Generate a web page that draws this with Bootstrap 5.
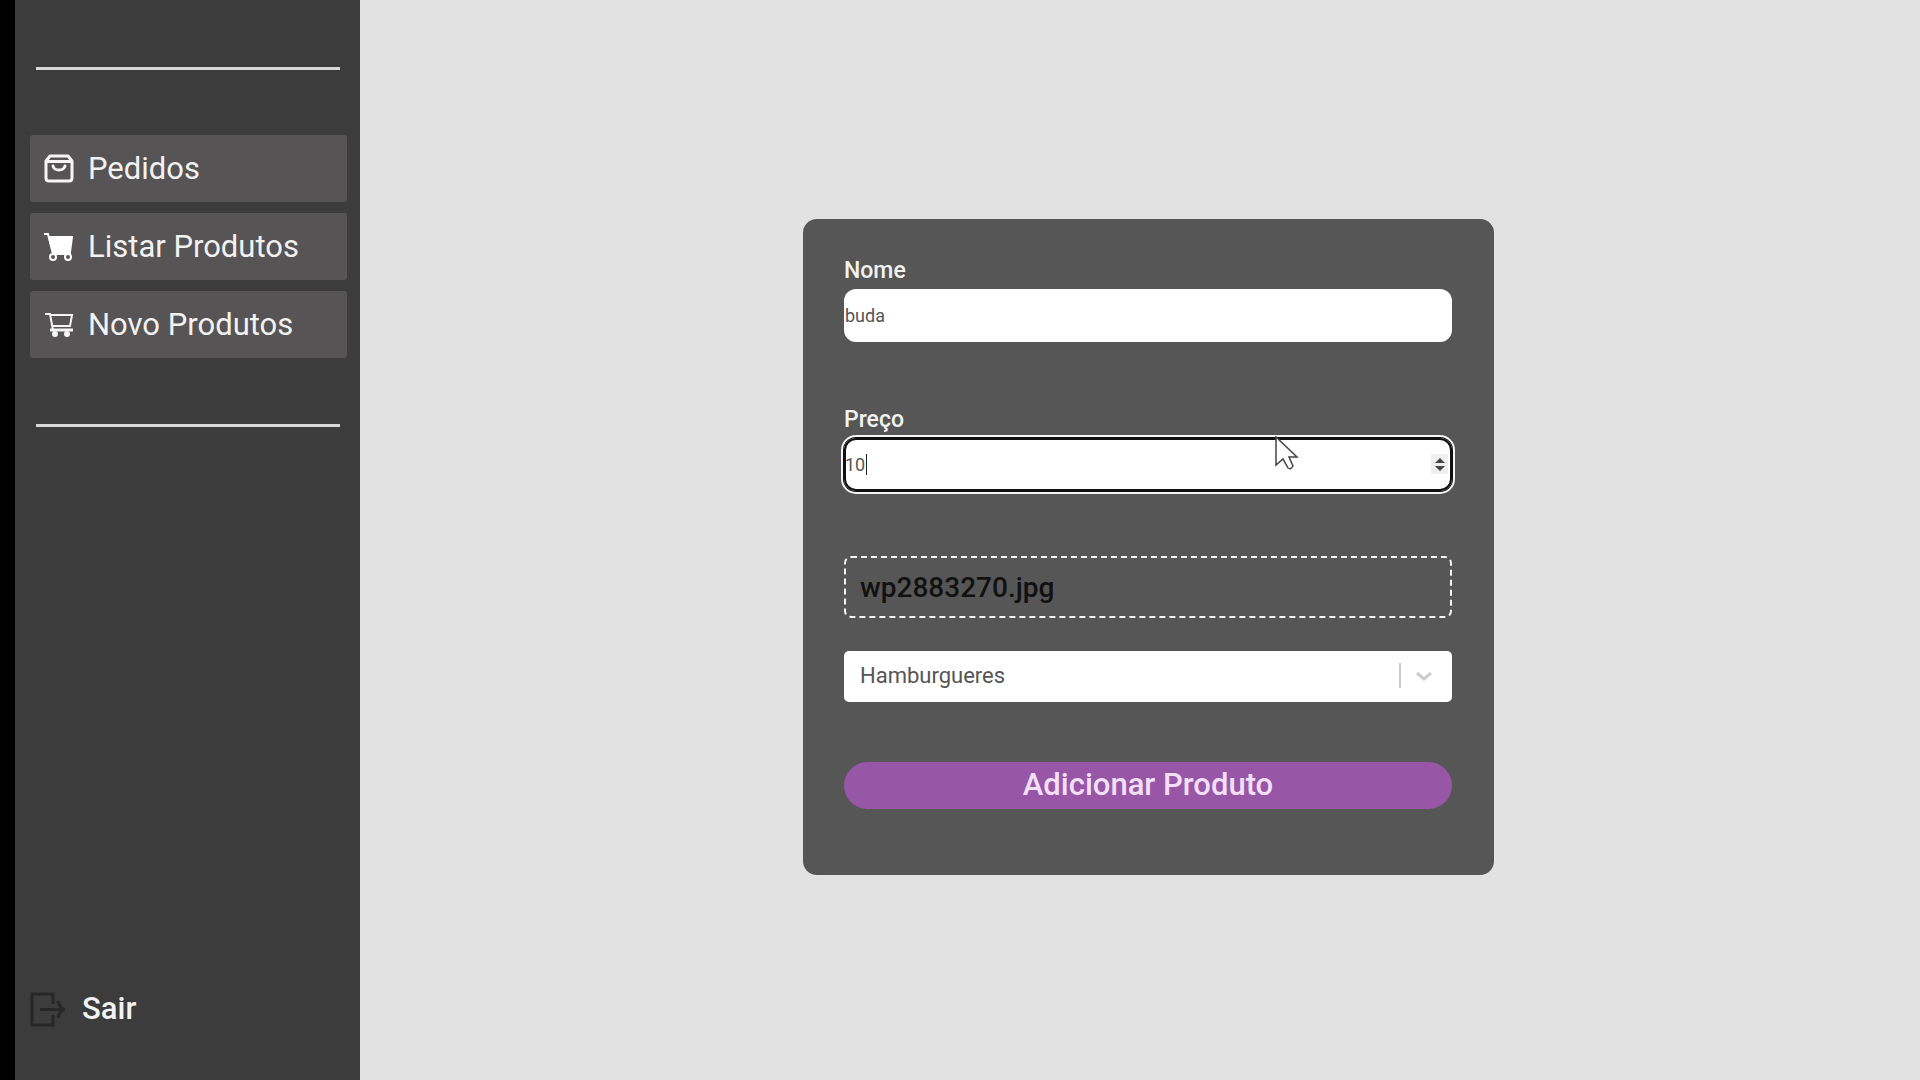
<!DOCTYPE html>
<html lang="pt-BR">
<head>
<meta charset="utf-8">
<meta name="viewport" content="width=device-width, initial-scale=1">
<title>Novo Produto</title>
<link href="https://cdn.jsdelivr.net/npm/bootstrap@5.3.0/dist/css/bootstrap.min.css" rel="stylesheet">
<style>
body { background: #e2e2e2; font-family: Roboto, "Liberation Sans", sans-serif; }
.side-panel { width: 360px; background: #3c3c3c; border-left: 15px solid #000; padding: 67px 13px 53px 15px; }
.side-rule { height: 3px; margin: 0 7px 0 6px; background: #d8d8d8; border: 0; opacity: 1; }
.side-menu { margin: 65px 0 66px; gap: 11px; }
.side-menu .nav-link { height: 67px; padding: 0 14px; gap: 14px; background: #565454; border-radius: 3px; }
.side-text { color: #f2f2f2; font-size: 31px; line-height: 36px; font-weight: 500; }
.side-menu .side-text { font-weight: 400; }
.exit-link { gap: 17px; }
.stage { padding: 13px 0 0 17px; }
.product-box { width: 691px; background: #565656; border-radius: 14px; padding: 37px 42px 66px 41px; }
.field-label { color: #f2f2f2; font-size: 23px; line-height: 30px; font-weight: 500; margin-bottom: 3px; }
.field-group { margin-bottom: 63px; }
.field-group + .field-group { margin-bottom: 65px; }
.field-box { height: 53px; border: 0; padding: 0 1px; border-radius: 12px; font-size: 18px; color: #555; background: #fff; }
.field-box:focus { box-shadow: none; }
.field-box.is-active, .field-box.is-active:focus { box-shadow: inset 0 0 0 2px #111, 0 0 0 1px #111, 0 0 0 3px #f5f5f5; appearance: textfield; }
.field-box.is-active::-webkit-inner-spin-button { appearance: none; }
.text-caret { left: 22px; top: 16px; width: 1px; height: 21px; background: #222; }
.stepper { right: 4px; top: 16px; width: 17px; height: 20px; background: #efefef; }
.pointer-mark { right: 153px; top: -2px; }
.file-box { height: 62px; padding: 2px 14px 0; margin-bottom: 33px; border: 2px dashed #f5f5f5; border-radius: 7px; color: #111; font-size: 28px; font-weight: 500; line-height: 32px; }
.category-select { height: 51px; padding: 0 60px 2px 16px; border: 0; border-radius: 5px; font-size: 22px; color: #555; background: #fff; }
.category-mark { right: 18px; top: 12px; }
.add-btn { height: 47px; margin-top: 60px; padding: 0; border: 0; border-radius: 24px; background: #9757a6; color: #f3dff7; font-size: 31px; line-height: 46px; font-weight: 500; }
</style>
<script src="https://cdn.jsdelivr.net/npm/bootstrap@5.3.0/dist/js/bootstrap.bundle.min.js"></script>
</head>
<body>
<div class="d-flex min-vh-100">
  <aside class="side-panel d-flex flex-column flex-shrink-0">
    <hr class="side-rule">
    <nav class="side-menu nav flex-column">
      <a class="nav-link side-text d-flex align-items-center" href="#">
        <svg width="30" height="30" viewBox="0 0 30 30" fill="none" stroke="#f5f5f5" stroke-width="3" stroke-linejoin="round" stroke-linecap="round" aria-hidden="true"><path d="M6 2H24L28 7V24Q28 27 25 27H5Q2 27 2 24V7ZM2.500 7.500H27.500"/><path d="M9 12Q10 16 15 16Q20 16 21 12"/></svg>
        Pedidos</a>
      <a class="nav-link side-text d-flex align-items-center" href="#">
        <svg width="30" height="30" viewBox="0 0 30 30" fill="none" stroke="#fff" stroke-width="2" aria-hidden="true"><path d="M0 2H4L9 22H27"/><path d="M5 5H28L26 20H9Z" fill="#fff"/><circle cx="9" cy="25" r="3"/><circle cx="24" cy="25" r="3"/></svg>
        Listar Produtos</a>
      <a class="nav-link side-text d-flex align-items-center" href="#">
        <svg width="30" height="30" viewBox="0 0 30 30" fill="none" stroke="#f5f5f5" stroke-width="2" aria-hidden="true"><path d="M1 4H6L9 20H29M7 5H28L26 16H9"/><path d="M6 20H29" stroke-width="3"/><g fill="#f5f5f5"><circle cx="11" cy="24" r="2"/><circle cx="23" cy="24" r="2"/></g></svg>
        Novo Produtos</a>
    </nav>
    <hr class="side-rule">
    <a class="exit-link side-text d-flex align-items-center mt-auto text-decoration-none" href="#">
      <svg width="35" height="35" viewBox="0 0 35 35" fill="none" stroke="#272727" stroke-width="3" aria-hidden="true"><path d="M23 12V2H2V33H23V23M10 17.500H33M28 9Q29 15 34 17.500Q29 20 28 26"/></svg>
      Sair</a>
  </aside>
  <main class="stage flex-grow-1 d-flex align-items-center justify-content-center">
    <form class="product-box">
      <div class="field-group">
        <label class="field-label d-block" for="nome">Nome</label>
        <input class="field-box form-control" id="nome" type="text" value="buda">
      </div>
      <div class="field-group">
        <label class="field-label d-block" for="preco">Preço</label>
        <div class="position-relative">
          <input class="field-box form-control is-active" id="preco" type="number" value="10">
          <span class="text-caret position-absolute"></span>
          <svg class="stepper position-absolute" viewBox="0 0 17 20" fill="#444" aria-hidden="true"><path d="M4 9L9 4L14 9ZM4 12L9 17L14 12Z"/></svg>
          <svg class="pointer-mark position-absolute" width="24" height="36" viewBox="0 0 24 36" fill="#fff" stroke="#444" stroke-width="1.500" aria-hidden="true"><path d="M1 1V29L8 23L13 32Q16 34 18 30L14 21H22Z"/></svg>
        </div>
      </div>
      <label class="file-box d-flex align-items-center" for="imagem">wp2883270.jpg</label>
      <input class="d-none" id="imagem" type="file">
      <div class="position-relative">
        <select class="category-select form-select" aria-label="Categoria"><option>Hamburgueres</option></select>
        <svg class="category-mark position-absolute pe-none" width="36" height="26" viewBox="0 0 36 26" fill="none" stroke="#ccc" aria-hidden="true"><path d="M2 0V25" stroke-width="2"/><path d="M19 10L26 16L33 10" stroke-width="3"/></svg>
      </div>
      <button class="add-btn btn w-100 d-block" type="submit">Adicionar Produto</button>
    </form>
  </main>
</div>
</body>
</html>
